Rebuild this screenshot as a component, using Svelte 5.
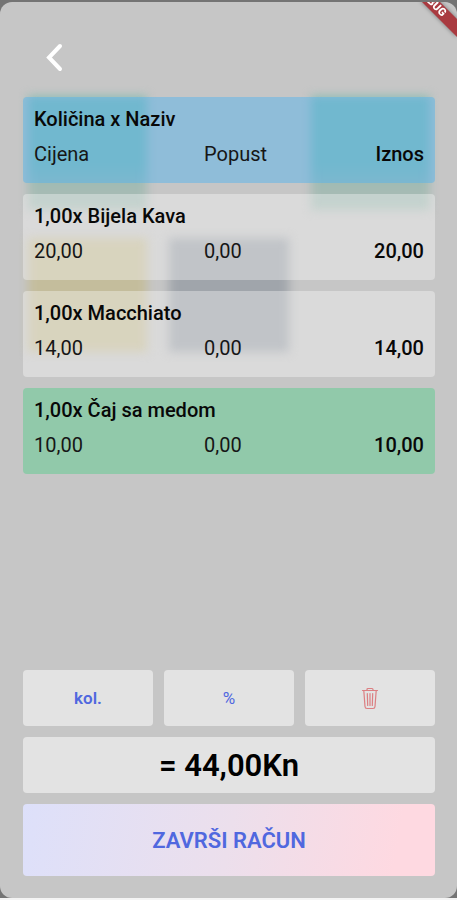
<script>
	const items = [
		{ name: 'Bijela Kava', qty: 1, price: 20, discount: 0 },
		{ name: 'Macchiato', qty: 1, price: 14, discount: 0 },
		{ name: 'Čaj sa medom', qty: 1, price: 10, discount: 0 }
	];
	let selected = $state(2);

	const format = (n) => n.toFixed(2).replace('.', ',');
	const total = items.reduce((sum, item) => sum + item.qty * item.price - item.discount, 0);

	// blurred article tiles behind the bill
	const tiles = ['green', '', 'green', 'yellow', 'slate'];
</script>

<div class="page">
	<main class="screen">
		<div class="tiles" aria-hidden="true">
			{#each tiles as tile}
				<span class="tile {tile}"></span>
			{/each}
		</div>

		<svg class="ribbon" width="40" height="44" viewBox="0 0 40 44">
			<path d="M5 0 L21 0 L40 19 L40 37 L3 0z" fill="#a93a40" />
			<text transform="translate(25 17) rotate(45)" text-anchor="end">BUG</text>
		</svg>

		<header>
			<button class="back" aria-label="Natrag">
				<svg width="20" height="30" viewBox="0 0 20 30" fill="none">
					<path d="M15 3 L4 14.5 L15 26" stroke="#fff" stroke-width="4" stroke-linecap="round" />
				</svg>
			</button>
		</header>

		<table>
			<thead>
				<tr class="card head">
					<th class="name">Količina x Naziv</th>
					<th>Cijena</th>
					<th>Popust</th>
					<th class="amount">Iznos</th>
				</tr>
			</thead>
			<tbody>
				{#each items as item, i}
					<tr class="card" class:selected={selected === i} onclick={() => (selected = i)}>
						<td class="name">{format(item.qty)}x {item.name}</td>
						<td>{format(item.price)}</td>
						<td>{format(item.discount)}</td>
						<td class="amount">{format(item.qty * item.price)}</td>
					</tr>
				{/each}
			</tbody>
		</table>

		<footer>
			<div class="actions">
				<button class="action">kol.</button>
				<button class="action percent">%</button>
				<button class="action" aria-label="Obriši">
					<svg width="18" height="24" viewBox="0 0 18 24" fill="none" stroke="#dc7f82" stroke-width="1.2" stroke-linecap="round" stroke-linejoin="round">
						<path d="M1.5 4.5h15M6 4V3.4Q6 2.5 7 2.5h4q1 0 1 .9V4" />
						<path d="M2.8 4.5l1.2 16Q4.1 22.5 6 22.5h6q1.9 0 2-2l1.2-16" />
						<path d="M6.3 7.5l.4 12M9 7.5v12M11.7 7.5l-.4 12" />
					</svg>
				</button>
			</div>
			<div class="total">= {format(total)}Kn</div>
			<button class="finish">ZAVRŠI RAČUN</button>
		</footer>
	</main>
</div>

<style>
	:global(body) {
		margin: 0;
		background: #fff;
	}
	.page {
		box-sizing: border-box;
		display: flex;
		min-height: 100vh;
		padding-top: 2px;
		border-bottom: 2px solid #f4f4f4;
		background: #747474;
		font-family: Roboto, 'Liberation Sans', sans-serif;
	}
	.screen {
		box-sizing: border-box;
		position: relative;
		flex: 1;
		display: flex;
		flex-direction: column;
		min-width: 0;
		padding: 35px 22px 22px 23px;
		border-radius: 12px;
		overflow: hidden;
		background: #c6c6c6;
	}
	.tiles {
		position: absolute;
		top: 94px;
		left: 28px;
		right: 27px;
		display: grid;
		grid-template-columns: repeat(3, 1fr);
		grid-auto-rows: 114px;
		gap: 28px 22px;
		filter: blur(5px);
	}
	.green {
		background: linear-gradient(#8abcb2 60%, #a5bbb4 80%);
	}
	.yellow {
		background: #c4bd9c;
	}
	.slate {
		background: #a0a5ab;
	}
	.ribbon {
		position: absolute;
		top: -2px;
		right: 0;
		filter: drop-shadow(0 0 2px rgba(0, 0, 0, 0.4));
	}
	.ribbon text {
		fill: #fff;
		font-size: 11px;
		font-weight: 900;
	}
	header,
	table,
	footer {
		position: relative;
	}
	header {
		height: 60px;
		padding-left: 22px;
	}
	button {
		padding: 0;
		border: 0;
		font-family: inherit;
		cursor: pointer;
	}
	.back {
		display: flex;
		padding: 6px 0;
		background: none;
	}
	table,
	thead,
	tbody {
		display: flex;
		flex-direction: column;
		gap: 11px;
	}
	.card {
		display: grid;
		grid-template-columns: 170px 1fr auto;
		row-gap: 10px;
		padding: 10px 11px 16px;
		border-radius: 4px;
		background: rgba(255, 255, 255, 0.35);
		color: #161616;
		font-size: 20px;
		line-height: 25px;
	}
	.head {
		background: rgba(88, 180, 236, 0.5);
	}
	.selected {
		background: #91c9aa;
	}
	th,
	td {
		padding: 0;
		font-weight: 400;
		text-align: left;
	}
	.name {
		grid-column: 1 / -1;
	}
	.name,
	.amount {
		color: #080808;
		font-weight: 500;
	}
	.amount {
		text-align: right;
	}
	footer {
		display: flex;
		flex-direction: column;
		gap: 11px;
		margin-top: auto;
	}
	.actions {
		display: grid;
		grid-template-columns: repeat(3, 1fr);
		gap: 11px;
	}
	.action,
	.total,
	.finish {
		display: flex;
		align-items: center;
		justify-content: center;
		border-radius: 4px;
	}
	.action,
	.total {
		height: 56px;
		background: #e3e3e3;
	}
	.action {
		color: #5068df;
		font-size: 17px;
		font-weight: 600;
	}
	.percent {
		font-size: 17px;
		font-weight: 400;
	}
	.total {
		color: #000;
		font-size: 31px;
		font-weight: 600;
	}
	.finish {
		height: 72px;
		background: linear-gradient(100deg, #dde0fa, #ecdfec 50%, #fed9e1 90%);
		color: #5068df;
		font-size: 22px;
		font-weight: 600;
	}
</style>
